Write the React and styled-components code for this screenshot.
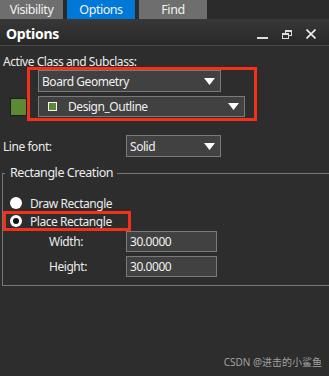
import React from 'react'
import styled, { createGlobalStyle } from 'styled-components'

const GlobalStyle = createGlobalStyle`
  html, body {
    margin: 0;
    padding: 0;
    background: #2d2d2d;
  }
  body {
    font-family: "Noto Sans", "Open Sans", Arial, sans-serif;
    font-size: 12px;
    letter-spacing: -0.45px;
    color: #ececec;
  }
`

const Window = styled.div`
  position: relative;
  width: 329px;
  height: 376px;
  overflow: hidden;
  background: #2d2d2d;
`

const TabBar = styled.div`
  display: flex;
  gap: 4px;
  height: 19px;
  background: #2b2b2b;
`

const Tab = styled.div`
  width: ${p => p.w}px;
  display: flex;
  align-items: center;
  justify-content: center;
  background: ${p => (p.active ? '#0078d7' : '#6e6e6e')};
  color: #f2f2f2;
  font-size: 12.5px;
  line-height: 19px;
`

const TitleBar = styled.div`
  height: 26px;
  display: flex;
  align-items: center;
  justify-content: space-between;
  padding: 0 13px 0 6px;
  background: linear-gradient(#383838, #282828);
  border-bottom: 1px solid #4a4a4a;
`

const Title = styled.div`
  font-size: 14px;
  font-weight: 700;
  letter-spacing: -0.3px;
  color: #fff;
  margin-top: 2px;
`

const TitleIcons = styled.div`
  display: flex;
  align-items: center;
  gap: 14px;
  margin-top: 4px;
`

const Body = styled.div`
  display: flex;
  flex-direction: column;
`

const SectionLabel = styled.div`
  margin: 9px 0 0 3px;
  line-height: 13px;
`

const ClassRow = styled.div`
  display: flex;
  align-items: flex-end;
  margin-top: -1px;
`

const Swatch = styled.div`
  width: 17px;
  height: 18px;
  margin: 0 0 5px 10px;
  background: #5c8a34;
  box-sizing: border-box;
  border: 1px solid #1d1d1d;
`

const Highlight = styled.div`
  width: 230px;
  box-sizing: border-box;
  border: 3px solid #f53018;
  padding: 0 9px 1px 8px;
  display: flex;
  flex-direction: column;
  gap: 4px;
`

const Select = styled.div`
  box-sizing: border-box;
  width: ${p => p.w}px;
  height: ${p => p.h || 22}px;
  display: flex;
  align-items: center;
  gap: 8px;
  padding: 0 5px 0 3px;
  background: #414141;
  border: 1px solid #7a7a7a;
  color: #f0f0f0;
`

const SelectText = styled.span`
  flex: 1;
`

const ColorBox = styled.span`
  width: 9px;
  height: 9px;
  margin-left: 6px;
  margin-right: 3px;
  box-sizing: border-box;
  border: 1px solid #fff;
  background: #5c8a34;
`

const FieldRow = styled.div`
  display: flex;
  align-items: center;
  margin: ${p => p.m || '0'};
`

const FieldLabel = styled.span`
  width: ${p => p.w}px;
`

const Group = styled.fieldset`
  margin: 9px -20px 0 2px;
  padding: 0 0 8px 3px;
  border: 1px solid #777;
  min-width: 0;
`

const Legend = styled.legend`
  padding: 0 4px 0 5px;
  margin-left: -1px;
  line-height: 14px;
  font-size: 12.5px;
`

const RadioRow = styled.div`
  width: 118px;
  height: 14px;
  display: flex;
  align-items: center;
  gap: 8px;
  padding-left: 4px;
  margin-top: ${p => p.mt}px;
  outline: ${p => (p.marked ? '3px solid #f53018' : 'none')};
`

const RadioDot = styled.span`
  width: 12px;
  height: 12px;
  border-radius: 50%;
  background: #fff;
  display: flex;
  align-items: center;
  justify-content: center;
  &::after {
    content: '';
    width: 6px;
    height: 6px;
    border-radius: 50%;
    background: ${p => (p.checked ? '#111' : 'transparent')};
  }
`

const Input = styled.div`
  box-sizing: border-box;
  width: 91px;
  height: 21px;
  padding-left: 3px;
  display: flex;
  align-items: center;
  background: #414141;
  border: 1px solid #7a7a7a;
  color: #f0f0f0;
`

const Watermark = styled.div`
  position: absolute;
  right: 7px;
  bottom: 7px;
  font-size: 10px;
  letter-spacing: 0;
  color: #a0a0a0;
  font-family: "Noto Sans", "Noto Sans CJK SC", sans-serif;
`

const Arrow = () => (
  <svg width="11" height="7" viewBox="0 0 11 7">
    <polygon points="0,0 11,0 5.5,7" fill="#fff" />
  </svg>
)

const App = () => (
  <Window>
    <GlobalStyle />
    <TabBar>
      <Tab w={63}>Visibility</Tab>
      <Tab w={68} active>Options</Tab>
      <Tab w={68}>Find</Tab>
    </TabBar>
    <TitleBar>
      <Title>Options</Title>
      <TitleIcons>
        <svg width="11" height="10" viewBox="0 0 11 10">
          <rect x="0" y="8" width="11" height="2" fill="#ddd" />
        </svg>
        <svg width="10" height="9" viewBox="0 0 10 9">
          <rect x="3.5" y="0.5" width="6" height="5" fill="none" stroke="#ddd" />
          <rect x="3.5" y="0.5" width="6" height="1.5" fill="#ddd" />
          <rect x="0.5" y="3.5" width="6" height="5" fill="#2f2f2f" stroke="#ddd" />
          <rect x="0.5" y="3.5" width="6" height="1.5" fill="#ddd" />
        </svg>
        <svg width="10" height="10" viewBox="0 0 10 10">
          <path d="M0.5 0.5 L9.5 9.5 M9.5 0.5 L0.5 9.5" stroke="#eee" strokeWidth="1.6" />
        </svg>
      </TitleIcons>
    </TitleBar>
    <Body>
      <SectionLabel>Active Class and Subclass:</SectionLabel>
      <ClassRow>
        <Swatch />
        <Highlight>
          <Select w={183}>
            <SelectText>Board Geometry</SelectText>
            <Arrow />
          </Select>
          <Select w={207} h={21}>
            <ColorBox />
            <SelectText>Design_Outline</SelectText>
            <Arrow />
          </Select>
        </Highlight>
      </ClassRow>
      <FieldRow m="14px 0 0 3px">
        <FieldLabel w={123}>Line font:</FieldLabel>
        <Select w={95}>
          <SelectText>Solid</SelectText>
          <Arrow />
        </Select>
      </FieldRow>
      <Group>
        <Legend>Rectangle Creation</Legend>
        <RadioRow mt={16}>
          <RadioDot />
          Draw Rectangle
        </RadioRow>
        <RadioRow mt={4} marked>
          <RadioDot checked />
          Place Rectangle
        </RadioRow>
        <FieldRow m="3px 0 0 43px">
          <FieldLabel w={77}>Width:</FieldLabel>
          <Input>30.0000</Input>
        </FieldRow>
        <FieldRow m="4px 0 0 43px">
          <FieldLabel w={77}>Height:</FieldLabel>
          <Input>30.0000</Input>
        </FieldRow>
      </Group>
    </Body>
    <Watermark>CSDN @进击的小鲨鱼</Watermark>
  </Window>
)

export default App
